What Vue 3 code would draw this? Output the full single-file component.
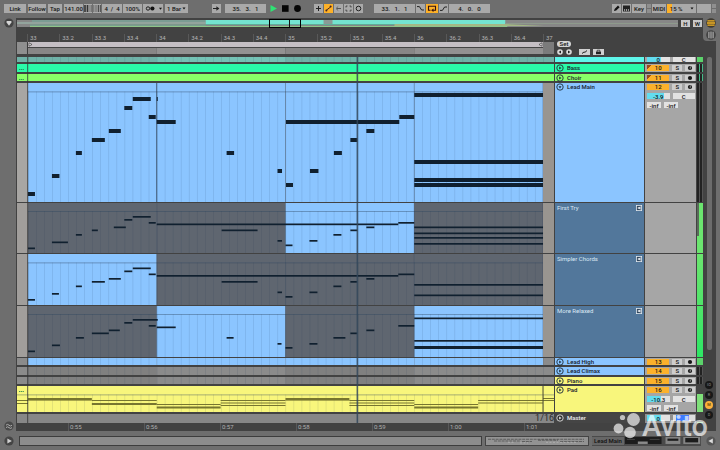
<script setup>
import { ref } from 'vue'

const tempo = ref('141.00')
const signature = ref('4  /  4')
const groove = ref('100%')
const quantize = ref('1 Bar')
const position = ref('35.   3.   1')
const loopStart = ref('33.   1.   1')
const loopLength = ref('4.   0.   0')

const beats = ['33', '33.2', '33.3', '33.4', '34', '34.2', '34.3', '34.4', '35', '35.2', '35.3', '35.4', '36', '36.2', '36.3', '36.4', '37']
const times = ['0:55', '0:56', '0:57', '0:58', '0:59', '1:00', '1:01']

/* Timeline units: bar 33 starts at 28, each bar is 129 long. */
const bars = [28, 157, 286, 415]
const ends = [157, 286, 415, 544]
const steps = Array.from({ length: 65 }, (_, i) => 28 + i * 8.0625)

/* Notes: [start, end, top, thickness]. */
const note = (list, h) => list.map(([a, b, y, t]) => ({ x: a, w: b - a, y, h: t || h }))

const leadNotes = note([
  [28, 35, 109], [52, 59.5, 91], [76, 82, 68], [92, 105, 55], [109, 121, 46], [124.5, 132.5, 23],
  [133, 151, 14], [157, 158, 14], [149, 156, 32], [157, 176, 37], [227, 234.5, 68], [278, 282.5, 86],
  [286.5, 293.5, 100], [286.5, 400, 37], [400, 415, 32], [367, 375, 46], [351, 358, 55],
  [334.5, 342.5, 68], [310.5, 319, 86], [415, 544, 10], [415, 544, 77], [415, 544, 95], [415, 544, 100]
], 4)

const takeOne = note([
  [28, 35, 44.5], [52, 68, 38.5], [76, 82, 31], [92, 98, 26.5], [114, 126, 23.5], [124.5, 132.5, 16], [133, 151, 13],
  [149, 156, 19], [157, 399, 20.5], [222, 258, 26.5], [278, 282.5, 37], [286, 293, 41.5], [399, 415, 19],
  [310, 318, 37], [334, 342, 31], [351, 358, 26.5], [367, 375, 23.5],
  [415, 544, 23.5], [415, 544, 29.5], [415, 544, 34], [415, 544, 40]
], 1.7)
const takeTwo = note([
  [28, 35, 45], [52, 59, 39], [76, 82, 31.5], [92, 105, 27], [109, 121, 24], [124.5, 132.5, 16.5], [133, 151, 13.5],
  [149, 156, 19.5], [157, 399, 21], [222, 258, 27], [278, 282.5, 37.5], [286, 293, 42], [310, 318, 37.5],
  [334, 342, 31.5], [351, 358, 27], [367, 375, 24], [399, 415, 19.5], [415, 544, 30], [415, 544, 40.5]
], 1.7)
const takeThree = note([
  [28, 35, 44.5], [52, 60, 38.5], [76, 84, 31], [92, 109, 26.5], [109, 120, 23.5], [124.5, 132.5, 16], [133, 158, 13],
  [149, 156, 19], [157, 176, 20.5], [227, 234, 31], [278, 282, 37], [286, 293, 41], [310, 318, 37],
  [334, 346, 31], [351, 358, 26.5], [367, 375, 23.5], [399, 415, 19], [415, 544, 11.5], [415, 544, 34], [415, 544, 40, 3]
], 1.7)
const padNotes = note([
  [17, 28, 14], [17, 28, 17], [28, 92, 12, 2.6], [92, 157, 14], [92, 157, 17, 2], [157, 221, 18], [157, 221, 20.5, 2],
  [221, 286, 14], [221, 286, 16.5], [221, 286, 19], [286, 350, 12, 2.6], [350, 415, 14], [350, 415, 16.5], [350, 415, 19],
  [415, 479, 18], [415, 479, 20.5, 2], [479, 544, 14], [479, 544, 16.5], [544, 555, 12], [544, 555, 14]
], 1)

const BLUE = '#8bc5ff'
const tracks = [
  { id: 'strings', h: 7, color: '#5ff6ea', lane: '#6fb2a8', cut: true },
  { id: 'bass', name: 'Bass', h: 10, color: '#2afaa9', lane: '#2afaa9', num: 10, flag: true, rec: 'note', full: true },
  { id: 'choir', name: 'Choir', h: 9, color: '#89ff67', lane: '#89ff67', num: 11, flag: true, rec: 'dot', full: true },
  { id: 'lead', name: 'Lead Main', h: 120, color: BLUE, active: [0, 1, 2, 3], num: 12, rec: 'note', vol: '-3.9', fill: 75, open: true, line: 8.5, notes: leadNotes, grow: true },
  { id: 't1', name: 'First Try', h: 51, take: true, active: [2], line: 8, notes: takeOne },
  { id: 't2', name: 'Simpler Chords', h: 52, take: true, active: [0], line: 8.5, notes: takeTwo },
  { id: 't3', name: 'More Relaxed', h: 52, take: true, active: [1, 3], line: 8, notes: takeThree },
  { id: 'high', name: 'Lead High', h: 9, color: BLUE, active: [0, 1, 2, 3], num: 13, rec: 'dot' },
  { id: 'climax', name: 'Lead Climax', h: 10, color: BLUE, num: 14, rec: 'note' },
  { id: 'piano', name: 'Piano', h: 9, color: '#f8f67c', num: 15, rec: 'note' },
  { id: 'pad', name: 'Pad', h: 28, color: '#f8f67c', lane: '#f8f67c', num: 16, rec: 'note', vol: '-10.3', fill: 60, full: true, line: 8.5, notes: padNotes }
]
const laneBase = (t) => t.lane || (t.take ? '#a19e9b' : t.id === 'lead' ? '#a8a6a3' : '#8b8b8b')
const clipFill = (t, i) => {
  if (t.active?.includes(i)) return BLUE
  if (t.take) return '#5f6670'
  return i % 2 ? '#8b8b8b' : '#808080'
}
</script>

<template>
  <div class="app">
    <header class="bar">
      <div class="group tempo">
        <button class="ctl link">Link</button>
        <button class="ctl follow">Follow</button>
        <button class="ctl tap">Tap</button>
        <input v-model="tempo" class="ctl bpm" aria-label="Tempo" />
        <button class="ctl nudge" aria-label="Nudge down"><svg viewBox="0 0 8 7"><path d="M1 0v7M3.5 0v7" stroke="#333" stroke-width="1.6" /><path d="M6 0v7M7.5 0v7" stroke="#555" stroke-width=".6" /></svg></button>
        <button class="ctl nudge" aria-label="Nudge up"><svg viewBox="0 0 8 7"><path d="M.6 0v7M2.2 0v7M3.8 0v7" stroke="#555" stroke-width=".6" /><path d="M5.4 0v7M7.3 0v7" stroke="#444" stroke-width="1" /></svg></button>
        <input v-model="signature" class="ctl sig" aria-label="Time signature" />
        <input v-model="groove" class="ctl amount" aria-label="Groove amount" />
        <button class="ctl metro" aria-label="Metronome"><svg viewBox="0 0 20 9"><circle cx="5" cy="4.5" r="1.7" fill="none" stroke="#111" stroke-width=".9" /><circle cx="9.4" cy="4.5" r="2.1" fill="#111" /><path d="M16 3.8h3l-1.5 2z" fill="#111" /></svg></button>
        <span class="pick">
          <select v-model="quantize" class="ctl quant" aria-label="Quantization"><option>1 Bar</option><option>1/4</option></select>
          <svg viewBox="0 0 4 3"><path d="M.5.6h3L2 2.6z" fill="#111" /></svg>
        </span>
      </div>
      <div class="group transport">
        <button class="ctl jump" aria-label="Back to arrangement"><svg viewBox="0 0 9 9"><path d="M1 4.5h5" stroke="#222" /><path d="M4.4 2.2 7.4 4.5 4.4 6.8z" fill="#222" /></svg></button>
        <input v-model="position" class="ctl pos" aria-label="Position" />
        <button class="play" aria-label="Play"><svg viewBox="0 0 9 9"><path d="M1.5 1 8 4.5 1.5 8z" fill="#2fe374" /></svg></button>
        <button class="play" aria-label="Stop"><svg viewBox="0 0 9 9"><rect x="1" y="1.2" width="6.6" height="6.6" fill="#050505" /></svg></button>
        <button class="play" aria-label="Record"><svg viewBox="0 0 9 9"><circle cx="4.5" cy="4.5" r="3.4" fill="#050505" /></svg></button>
      </div>
      <div class="group">
        <button class="ctl sq" aria-label="Overdub"><svg viewBox="0 0 9 9"><path d="M4.5 2v5M2 4.5h5" stroke="#222" /></svg></button>
        <button class="ctl sq on" aria-label="Automation arm"><svg viewBox="0 0 9 9"><path d="M2.4 6.6 4 4.6h1L6.6 2.6" stroke="#422" fill="none" /><circle cx="2.4" cy="6.4" r="1" fill="#422" /><circle cx="6.6" cy="2.6" r="1" fill="#422" /></svg></button>
        <button class="ctl sq" aria-label="Re-enable automation"><svg viewBox="0 0 9 9"><path d="M3 4.5h4" stroke="#555" /><path d="M4.2 2.5 2 4.5l2.2 2" fill="none" stroke="#555" stroke-width=".8" /></svg></button>
        <button class="ctl sq" aria-label="Capture"><svg viewBox="0 0 9 9"><path d="M2 3.5V2h1.5M5.5 2H7v1.5M7 5.5V7H5.5M3.5 7H2V5.5" fill="none" stroke="#333" stroke-width=".8" /></svg></button>
        <button class="ctl sq" aria-label="Session record"><svg viewBox="0 0 9 9"><circle cx="4.5" cy="4.5" r="2.3" fill="none" stroke="#222" /></svg></button>
      </div>
      <div class="group">
        <input v-model="loopStart" class="ctl pos" aria-label="Loop start" />
        <button class="ctl sq" aria-label="Punch in"><svg viewBox="0 0 9 9"><path d="M1 2.6h2.4L5.6 6H8" fill="none" stroke="#222" /></svg></button>
        <button class="ctl loop on" aria-label="Loop"><svg viewBox="0 0 11 9"><path d="M4 6.2H2V2.2h7v4H6.5" fill="none" stroke="#311" stroke-width="1.1" /><path d="M7 4.4v3.6L4.6 6.2z" fill="#311" /></svg></button>
        <button class="ctl sq" aria-label="Punch out"><svg viewBox="0 0 9 9"><path d="M1 6.4h2.4L5.6 3H8" fill="none" stroke="#222" /></svg></button>
        <input v-model="loopLength" class="ctl pos" aria-label="Loop length" />
      </div>
      <div class="group status">
        <button class="ctl sq" aria-label="Draw mode"><svg viewBox="0 0 9 9"><path d="M2 7 2.6 5 6 1.6 7.6 3.2 4.2 6.6z" fill="#111" /></svg></button>
        <button class="ctl sq" aria-label="Computer keyboard"><svg viewBox="0 0 9 9"><rect x="1" y="1.5" width="7" height="6" fill="#222" /><path d="M2.6 5v2.2M4.5 5v2.2M6.4 5v2.2" stroke="#aaa" stroke-width=".9" /></svg></button>
        <button class="ctl key">Key</button>
        <span class="lamps"><i></i><i></i></span>
        <button class="ctl midi">MIDI</button>
        <button class="ctl cpu">15 % <svg viewBox="0 0 4 3"><path d="M.5.6h3L2 2.6z" fill="#111" /></svg></button>
        <span class="ctl disk"></span>
        <span class="lamps"><i></i><i></i></span>
      </div>
    </header>

    <main class="middle">
      <div class="gutter">
        <button class="round" aria-label="Show browser"><svg viewBox="0 0 10 10"><circle cx="5" cy="5" r="4.6" fill="#444" /><path d="M2.6 3h4.8v1.6L5 7.8 2.6 4.6z" fill="#d5d5d5" /></svg></button>
        <button class="round" aria-label="Groove pool"><svg viewBox="0 0 10 10"><circle cx="5" cy="5" r="4.6" fill="#4a4a4a" /><path d="M2 4.2q1.5-1.6 3 0t3 0M2 6.6q1.5-1.6 3 0t3 0" fill="none" stroke="#b5b5b5" stroke-width=".9" /></svg></button>
      </div>

      <section class="panel">
        <div class="top">
          <div class="topmain">
            <div class="overview">
              <svg class="strip" viewBox="17 0 662 7" preserveAspectRatio="none">
                <rect x="17" width="662" height="7" fill="#878787" />
                <rect x="32" width="174" height="2" fill="#7b9c93" />
                <rect x="17" y="2" width="189" height="2" fill="#93a49d" />
                <rect x="30" y="4.6" width="176" height="1" fill="#6fae94" />
                <rect x="206" width="300" height="4" fill="#74e4d0" />
                <rect x="206" y="4" width="300" height="1" fill="#5fae98" />
                <rect x="30" y="6" width="478" height="1" fill="#8fc488" />
                <rect x="324" y="0" width="9" height="4" fill="#8a9a96" />
                <rect x="506" y="3" width="173" height="1" fill="#8e9a8c" />
                <path d="M395 4h110l40 2h-150z" fill="#a3b884" />
              </svg>
              <span class="view" aria-hidden="true"></span>
              <button class="hw">H</button>
              <button class="hw">W</button>
            </div>
            <div class="rulers cols">
              <div class="timeline">
                <div class="beats"><span v-for="b in beats" :key="b">{{ b }}</span></div>
                <svg class="loopbar" viewBox="17 0 538 12" preserveAspectRatio="none">
                  <rect x="17" width="11" height="12" fill="#8f8f8f" />
                  <rect x="28" width="516" height="5" fill="#c5bfc4" />
                  <rect x="544" width="11" height="12" fill="#7b7b7b" />
                  <rect x="28" y="5" width="516" height="1" fill="#444" />
                  <rect v-for="(b, i) in bars" :key="b" :x="b" y="6" width="129" height="6" :fill="i % 2 ? '#939191' : '#888686'" />
                  <path d="M29 .8 32 2.5 29 4.2zM543 .8 540 2.5 543 4.2z" fill="#eee" stroke="#222" stroke-width=".6" />
                  <rect x="27" width="1" height="12" fill="#3c3c3c" />
                </svg>
              </div>
              <div class="locators">
                <button class="set">Set</button>
                <div class="locrow">
                  <button class="mini" aria-label="Previous locator"><svg viewBox="0 0 6 6"><circle cx="3" cy="3" r="2.8" fill="#ddd" /><path d="M4 1.5 1.6 3 4 4.5z" fill="#222" /></svg></button>
                  <button class="mini" aria-label="Next locator"><svg viewBox="0 0 6 6"><circle cx="3" cy="3" r="2.8" fill="#ddd" /><path d="M2 1.5 4.4 3 2 4.5z" fill="#222" /></svg></button>
                  <button class="tool" aria-label="Automation mode"><svg viewBox="0 0 11 6"><path d="M3 4.5 5 3l1 .3L8 1.5" stroke="#222" fill="none" /></svg></button>
                  <button class="tool" aria-label="Lock envelopes"><svg viewBox="0 0 11 6"><rect x="3" y="2.6" width="5" height="2.6" fill="#222" /><path d="M4.2 2.8V1.2h2.6v1.6" fill="none" stroke="#222" stroke-width=".7" /></svg></button>
                </div>
              </div>
            </div>
          </div>
          <nav class="switch">
            <button class="round" aria-label="Arrangement view"><svg viewBox="0 0 10 10"><circle cx="5" cy="5" r="4.8" fill="#3f3a30" /><path d="M1.4 2.9h7.2M1 5h8M1.4 7.1h7.2" stroke="#f3b423" stroke-width="1.3" /></svg></button>
            <button class="round" aria-label="Session view"><svg viewBox="0 0 10 10"><circle cx="5" cy="5" r="4.8" fill="#424242" /><path d="M2.9 1.8v6.4M5 1.4v7.2M7.1 1.8v6.4" stroke="#b5b5b5" stroke-width="1.1" /></svg></button>
          </nav>
        </div>

        <div class="body">
          <div class="tracks">
            <div v-for="t in tracks" :key="t.id" class="track cols" :class="{ grow: t.grow, thin: t.open || t.take }" :style="{ '--h': t.h + 'px' }">
              <svg class="lane" :viewBox="`17 0 538 ${t.h - (t.open || t.take ? 1 : 2)}`" preserveAspectRatio="none">
                <rect x="17" width="538" :height="t.h" :fill="laneBase(t)" />
                <template v-if="!t.full && !t.cut">
                  <rect v-for="(b, i) in bars" :key="b" :x="b" width="129" :height="t.h" :fill="clipFill(t, i)" />
                </template>
                <rect v-if="t.cut" x="157" width="129" height="7" fill="#74c2b5" />
                <template v-if="t.take || t.open || t.id === 'pad' || !t.full">
                  <rect v-for="s in steps" :key="s" :x="s" :y="t.line || 0" width=".6" :height="t.h" fill="#1b3350" opacity=".16" />
                </template>
                <rect v-if="t.line" :x="t.full ? 17 : 28" :y="t.line" :width="t.full ? 538 : 516" height=".8" fill="#2d4560" opacity=".5" />
                <template v-if="t.open || t.take">
                  <rect v-for="(b, i) in ends" :key="b" :x="b - .5" width="1" :height="t.h" fill="#263a52" :opacity="t.open && i === 0 ? .75 : .35" />
                  <rect x="544" width="11" :height="t.h" fill="#999590" />
                </template>
                <rect v-for="(n, i) in t.notes || []" :key="i" :x="n.x" :y="n.y" :width="n.w" :height="n.h" :fill="t.id === 'pad' ? '#77752f' : '#10202f'" />
                <path v-if="t.full" d="M19 5.5h5" stroke="#1d7f4c" stroke-width=".8" stroke-dasharray="1.3 .5" />
                <rect v-if="t.id === 'pad'" x="543.5" width="1" height="28" fill="#4a4a35" />
              </svg>

              <div class="head" :class="{ take: t.take }" :style="t.take ? {} : { background: t.color }">
                <button v-if="t.name && !t.take" class="fold" :aria-label="'Unfold ' + t.name"><svg viewBox="0 0 7 7"><circle cx="3.5" cy="3.5" r="2.8" fill="none" stroke="#20303c" stroke-width=".8" /><path v-if="t.open" d="M2.2 2.8h2.6L3.5 4.8z" fill="#20303c" /><path v-else d="M2.8 2.2 4.8 3.5 2.8 4.8z" fill="#20303c" /></svg></button>
                <span class="name">{{ t.name }}</span>
                <button v-if="t.take" class="audition" :aria-label="'Audition ' + t.name"><svg viewBox="0 0 6 6"><rect x=".4" y=".4" width="5.2" height="5.2" fill="#31465c" stroke="#e2e8ee" stroke-width=".8" /><path d="M4.6 1.2v3.6L3 3.7H1.8V2.3H3z" fill="#e2e8ee" /></svg></button>
              </div>

              <div class="mix">
                <div v-if="t.num" class="cells">
                  <button class="num" :class="{ flag: t.flag }">{{ t.num }}</button>
                  <button class="solo">S</button>
                  <button class="arm" :aria-label="'Arm ' + t.name"><svg viewBox="0 0 6 6"><circle cx="3" cy="3" r="2.1" fill="#151515" /><path v-if="t.rec === 'note'" d="M3.2 4.2V1.8l.9.6" fill="none" stroke="#ccc" stroke-width=".6" /></svg></button>
                </div>
                <template v-if="t.vol">
                  <div class="cells">
                    <input class="vol" :value="t.vol" :style="{ '--fill': t.fill + '%' }" :aria-label="t.name + ' volume'" />
                    <input class="pan" value="C" :aria-label="t.name + ' pan'" />
                  </div>
                  <div class="cells">
                    <input class="send" value="-inf" :aria-label="t.name + ' send A'" />
                    <input class="send" value="-inf" :aria-label="t.name + ' send B'" />
                  </div>
                </template>
                <div v-if="t.cut" class="cells low">
                  <input class="vol" value="0" style="--fill: 60%" aria-label="Group volume" />
                  <input class="pan" value="C" aria-label="Group pan" />
                </div>
              </div>
              <div class="meter" :class="[t.id]"></div>
            </div>

            <div class="track cols master" style="--h: 9px">
              <div class="grid"><span>1/16</span></div>
              <div class="head">
                <button class="fold" aria-label="Unfold Master"><svg viewBox="0 0 7 7"><circle cx="3.5" cy="3.5" r="2.8" fill="#333" stroke="#ddd" stroke-width=".8" /><path d="M2.8 2.2 4.8 3.5 2.8 4.8z" fill="#eee" /></svg></button>
                <span class="name">Master</span>
              </div>
              <div class="mix">
                <div class="cells">
                  <input class="vol" value="0" style="--fill: 60%" aria-label="Master volume" />
                  <button class="cue" aria-label="Cue out"></button>
                </div>
              </div>
              <div class="meter pad"></div>
            </div>

            <div class="overlay cols" aria-hidden="true">
              <svg viewBox="17 0 538 366" preserveAspectRatio="none">
                <rect x="357.2" width="1.6" height="366" fill="#33475a" opacity=".85" />
                <rect x="27.2" width="1" height="366" fill="#333" opacity=".8" />
              </svg>
            </div>
          </div>
          <aside class="side">
            <div class="scroll"></div>
            <div class="dots">
              <button class="dot" aria-label="Show in and out">IO</button>
              <button class="dot" aria-label="Show returns">R</button>
              <button class="dot lit" aria-label="Show mixer">M</button>
              <button class="dot" aria-label="Show delays">D</button>
            </div>
          </aside>
        </div>
        <div class="times"><span v-for="x in times" :key="x">{{ x }}</span></div>
      </section>
    </main>

    <footer class="foot">
      <button class="round" aria-label="Show info"><svg viewBox="0 0 10 10"><circle cx="5" cy="5" r="4.6" fill="#444" /><path d="M3.4 2.4 7.8 5 3.4 7.6z" fill="#d0d0d0" /></svg></button>
      <div class="info"></div>
      <div class="clip"><svg viewBox="0 0 102 9" preserveAspectRatio="none"><path d="M2 2.5h96M8 4.5h26M36 5h10M52 3.6h20M74 5h24" stroke="#5e5e5e" stroke-width="1.2" stroke-dasharray="3 .8" /><path d="M22 6h6M34 6.6h8M60 6h30" stroke="#b5b5b5" stroke-width=".8" stroke-dasharray="2 1.5" /></svg></div>
      <div class="chain">
        <span class="label">Lead Main</span>
        <svg viewBox="0 0 78 9"><rect x="1" y="1" width="37" height="7" fill="#1c1c1c" /><rect x="14" y="5.5" width="10" height="2.5" fill="#8b8b8b" /><path d="M3 3.4h8M26 3.4h10" stroke="#555" stroke-width=".7" /><rect x="42" y="1" width="15" height="7" fill="#858585" /><rect x="44" y="2.6" width="11" height="2.2" fill="#1c1c1c" /><rect x="60" y="1" width="17" height="7" fill="#858585" /><rect x="62" y="2" width="13" height="4.4" fill="#1c1c1c" /></svg>
      </div>
      <button class="round" aria-label="Show detail"><svg viewBox="0 0 10 10"><circle cx="5" cy="5" r="4.6" fill="#555" /><path d="M6.8 2.4 2.4 5l4.4 2.6z" fill="#ddd" /></svg></button>
    </footer>

    <div class="mark">
      <svg viewBox="0 0 28 27"><g fill="#fff"><circle cx="9.5" cy="4.5" r="2.6" /><circle cx="20.5" cy="6.5" r="6.4" /><circle cx="5.5" cy="15.5" r="4.9" /><circle cx="17" cy="19.5" r="5.8" /></g></svg>
      <span>Avito</span>
    </div>
  </div>
</template>

<style>
body { margin: 0; background: #6e6e6e; }
</style>

<style scoped>
* { box-sizing: border-box; }
.app {
  position: relative;
  display: flex;
  flex-direction: column;
  min-height: 100vh;
  background: #6e6e6e;
  color: #151515;
  font-family: Roboto, "Liberation Sans", sans-serif;
  font-size: 6px;
  font-weight: 500;
  line-height: 8px;
  overflow: hidden;
}
button, input, select {
  appearance: none;
  margin: 0;
  padding: 0;
  border: 0;
  border-radius: 0;
  background: none;
  color: inherit;
  font: inherit;
  text-align: center;
  min-width: 0;
}
svg { display: block; }

.bar { display: flex; gap: 11px; height: 18px; padding: 4px 4px 5px; }
.group { display: flex; gap: 1px; }
.tempo { margin-right: 13px; }
.status { margin-left: auto; }
.ctl { height: 9px; background: #a9a9a9; white-space: pre; }
.ctl svg { height: 9px; margin: 0 auto; }
.link { width: 22px; margin-right: 1px; }
.follow { width: 18px; margin-right: 1px; }
.tap { width: 14px; margin-right: 1px; }
.bpm { width: 19px; }
.nudge { width: 8px; }
.nudge svg { height: 7px; }
.sig { width: 20px; }
.amount { width: 19px; }
.metro { width: 20px; }
.pick { position: relative; margin-left: 1px; }
.quant { width: 23px; padding-left: 2px; text-align: left; }
.pick svg { position: absolute; right: 2px; top: 3px; width: 4px; pointer-events: none; }
.jump, .sq { width: 9px; }
.jump { margin-right: 3px; }
.pos { width: 41px; }
.sq.on, .loop.on { background: #fdb128; }
.loop { width: 12px; }
.sq svg, .loop svg { width: 100%; }
.play { width: 11px; }
.play svg { width: 9px; height: 9px; margin: 0 auto; }
.transport .pos { margin-right: 1px; }
.key { width: 14px; }
.midi { width: 14px; }
.lamps { display: grid; gap: 1px; width: 4px; }
.lamps i { background: #8f8f8f; }
.cpu { display: flex; align-items: center; justify-content: flex-end; gap: 6px; width: 29px; padding-right: 2px; background: linear-gradient(90deg, #fdb128 5px, #a9a9a9 5px); }
.cpu svg { width: 4px; height: 3px; margin: 0; }
.disk { width: 14px; }

.middle { display: flex; flex: 1; padding-right: 4px; }
.gutter { display: flex; flex-direction: column; justify-content: space-between; width: 16px; padding: 0 0 0 4px; }
.round { width: 10px; height: 10px; }
.round svg { width: 10px; height: 10px; }
.panel { display: flex; flex-direction: column; flex: 1; min-width: 0; padding-left: 1px; background: #424242; }
.cols { display: grid; grid-template-columns: 1fr 89px 51px 6px; column-gap: 1px; }

.top { display: flex; }
.topmain { flex: 1; padding-top: 2px; }
.switch { display: flex; flex-direction: column; gap: 2px; width: 13px; height: 23px; padding-left: 3px; background: #6e6e6e; border-bottom-left-radius: 4px; }
.overview { position: relative; display: flex; gap: 3px; height: 7px; padding-right: 1px; }
.strip { flex: 1; width: 0; height: 7px; }
.view { position: absolute; left: calc(37% - 2px); top: -1px; width: 32px; height: 9px; border: 1px solid #000; }
.view::after { content: ""; position: absolute; left: 19px; top: 0; width: 1px; height: 7px; background: #111; }
.hw { width: 9px; height: 7px; background: #c9c9c9; line-height: 7px; }
.timeline { display: flex; flex-direction: column; }
.beats { display: grid; grid-template-columns: repeat(16, 1fr) 11px; padding: 7px 0 0 10px; color: #b4b4b4; font-weight: 400; }
.beats span { padding-left: 2px; border-left: 1px solid #585858; }
.loopbar { width: 100%; height: 12px; margin-bottom: 3px; }
.locators { display: flex; flex-direction: column; gap: 2px; padding: 14px 0 0 2px; }
.set { width: 14px; height: 6px; border-radius: 3px; background: #d5d5d5; line-height: 6px; }
.locrow { display: flex; gap: 3px; }
.mini { width: 6px; height: 6px; }
.tool { width: 11px; height: 6px; background: #d0d0d0; }
.tool:nth-child(3) { margin-left: 4px; }

.body { display: flex; flex: 1; }
.tracks { position: relative; display: flex; flex-direction: column; flex: 1; min-width: 0; }
.track { flex: 0 0 var(--h); height: var(--h); padding-bottom: 2px; overflow: hidden; }
.track.grow { flex: 1 0 var(--h); height: auto; }
.track.thin { padding-bottom: 1px; }
.lane { width: 100%; height: 100%; min-height: 0; }
.head { display: flex; align-items: flex-start; gap: 3px; padding: 0 1px; color: #16202a; min-height: 0; }
.fold { width: 8px; height: 8px; }
.fold svg { width: 8px; height: 8px; }
.name { flex: 1; white-space: nowrap; }
.head.take { padding: 1px 2px; background: #52779b; color: #dbe8f4; font-weight: 400; }
.audition { width: 6px; height: 6px; margin-top: 1px; }
.audition svg { width: 6px; height: 6px; }
.mix { display: flex; flex-direction: column; gap: 3px; padding: 1px 1px 0 2px; background: #a6a6a6; min-height: 0; min-width: 0; }
.cells { display: flex; gap: 3px; height: 6px; line-height: 6px; }
.cells > * { height: 6px; background: #cdcdcd; }
.num { width: 23px; }
.cells .num { background: #fcb12b; }
.cells .num.flag { background: linear-gradient(135deg, #9a4a1c 3px, #fcb12b 3px); }
.solo { width: 10px; }
.arm { width: 10px; }
.arm svg { width: 6px; height: 6px; margin: 0 auto; }
.cells .vol { width: 23px; background: linear-gradient(90deg, #62dcf0 var(--fill), #e2e2e2 var(--fill)); }
.pan { width: 23px; }
.cells .pan, .cells .send { background: #e2e2e2; }
.send { width: 14px; }
.cells.low { margin-top: -2px; }
.cells .cue { width: 23px; background: linear-gradient(90deg, #ddd 3px, #3d7bff 3px 16px, #ddd 16px); }
.meter { background: linear-gradient(90deg, #222 2px, #555 2px 3px, #222 3px 5px, #555 5px); }
.meter.strings, .meter.high { background: #5bd36b; }
.meter.bass, .meter.choir { background: linear-gradient(90deg, #222 2px, #4b8 2px 3px, #222 3px 5px, #4b8 5px); }
.meter.t1 { background: linear-gradient(#5a6a5a, #5a6a5a) 0 0 / 2px 33px no-repeat, #6be56f; }
.meter.t2 { background: linear-gradient(#6be56f, #50e46a); }
.meter.t3 { background: linear-gradient(#50e46a, #2de765); }
.meter.pad { background: linear-gradient(#444 8px, #7fe07a 8px); }
.master .head { background: #454545; color: #eee; }
.master .mix { background: #8f8f8f; }
.track.master { overflow: visible; padding-bottom: 0; }
.grid { display: flex; justify-content: flex-end; background: #878787; color: #2c2c2c; font-size: 9px; font-weight: 400; line-height: 9px; min-height: 0; }
.overlay { position: absolute; inset: 0; pointer-events: none; }
.overlay svg { width: 100%; height: 100%; }

.side { display: flex; flex-direction: column; width: 13px; padding-left: 2px; }
.scroll { flex: 1; width: 5px; margin: 0 0 31px 2px; border-radius: 2px; background: #6c6c6c; }
.dots { display: flex; flex-direction: column; gap: 2px; align-items: center; width: 8px; height: 41px; margin-bottom: 1px; }
.dot { width: 8px; height: 8px; border-radius: 50%; background: #181818; color: #777; font-size: 4px; line-height: 8px; }
.dot.lit { background: #fbb03b; color: #5a3a00; }
.times { display: grid; grid-template-columns: repeat(6, 76fr) 192fr; height: 8px; padding-left: 51px; color: #b0b0b0; font-weight: 400; line-height: 8px; }
.times span { padding-left: 1px; border-left: 1px solid #585858; }

.foot { display: flex; align-items: center; gap: 3px; height: 19px; padding: 0 4px; }
.info { flex: 1; height: 10px; margin-left: 2px; border: 1px solid #3d3d3d; background: #8c8c8c; }
.clip { width: 104px; height: 10px; border: 1px solid #444; background: #939393; }
.clip svg { width: 100%; height: 8px; }
.chain { display: flex; align-items: center; justify-content: space-between; width: 109px; height: 10px; background: #4a4a4a; margin-right: 2px; }
.label { padding: 0 2px; color: #101010; background: #666; white-space: nowrap; }
.chain svg { width: 78px; height: 9px; }

.mark { position: absolute; right: 12px; bottom: 9px; display: flex; align-items: center; gap: 1px; color: #fff; opacity: .66; pointer-events: none; }
.mark svg { width: 28px; height: 27px; }
.mark span { font-family: Roboto, sans-serif; font-size: 29px; font-weight: 500; line-height: 30px; }
</style>
